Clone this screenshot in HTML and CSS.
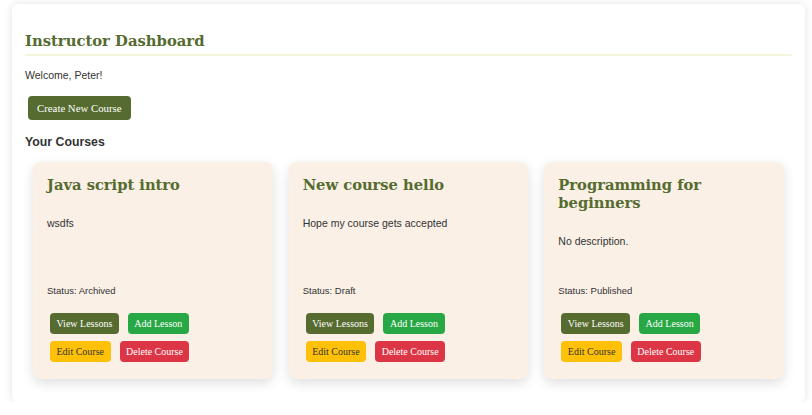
FILE: index.html
```html
<!DOCTYPE html>
<html lang="en">
<head>
<meta charset="utf-8">
<title>Instructor Dashboard</title>
<link rel="stylesheet" href="styles.css">
</head>
<body>
<div class="dashboard">
  <h2 class="page-title">Instructor Dashboard</h2>
  <p class="welcome">Welcome, Peter!</p>
  <button class="btn btn-olive btn-create">Create New Course</button>
  <h3 class="section-title">Your Courses</h3>
  <div class="course-grid">
    <div class="course-card">
      <h3 class="course-title">Java script intro</h3>
      <p class="course-desc">wsdfs</p>
      <p class="course-status">Status: Archived</p>
      <div class="course-actions">
        <div class="action-row">
          <button class="btn btn-olive">View Lessons</button>
          <button class="btn btn-green">Add Lesson</button>
        </div>
        <div class="action-row">
          <button class="btn btn-yellow">Edit Course</button>
          <button class="btn btn-red">Delete Course</button>
        </div>
      </div>
    </div>
    <div class="course-card">
      <h3 class="course-title">New course hello</h3>
      <p class="course-desc">Hope my course gets accepted</p>
      <p class="course-status">Status: Draft</p>
      <div class="course-actions">
        <div class="action-row">
          <button class="btn btn-olive">View Lessons</button>
          <button class="btn btn-green">Add Lesson</button>
        </div>
        <div class="action-row">
          <button class="btn btn-yellow">Edit Course</button>
          <button class="btn btn-red">Delete Course</button>
        </div>
      </div>
    </div>
    <div class="course-card">
      <h3 class="course-title">Programming for beginners</h3>
      <p class="course-desc">No description.</p>
      <p class="course-status">Status: Published</p>
      <div class="course-actions">
        <div class="action-row">
          <button class="btn btn-olive">View Lessons</button>
          <button class="btn btn-green">Add Lesson</button>
        </div>
        <div class="action-row">
          <button class="btn btn-yellow">Edit Course</button>
          <button class="btn btn-red">Delete Course</button>
        </div>
      </div>
    </div>
  </div>
</div>
</body>
</html>
```

FILE: styles.css
```css
* { box-sizing: border-box; }

html, body {
  margin: 0;
  background: #ffffff;
}

body {
  padding: 4px 7px 0 12px;
  font-family: "Liberation Sans", Arial, sans-serif;
  font-size: 10.5px;
  color: #333333;
}

.dashboard {
  background: #ffffff;
  border-radius: 6px;
  box-shadow: 0 0 8px rgba(0, 0, 0, 0.12);
  padding: 13px 13px 23px 13px;
  display: flex;
  flex-direction: column;
  align-items: flex-start;
}

.page-title {
  align-self: stretch;
  margin: 14px 0 0 0;
  padding-bottom: 3px;
  border-bottom: 2px solid #f5f5dc;
  font-family: "DejaVu Serif", Georgia, serif;
  font-weight: bold;
  font-size: 14.8px;
  line-height: 20px;
  color: #556b2f;
}

.welcome {
  margin: 12px 0 0 0;
  line-height: 14px;
}

.btn {
  font-family: "Liberation Serif", "Times New Roman", serif;
  border: none;
  border-radius: 4px;
  cursor: pointer;
  color: #ffffff;
  padding: 0 7px;
  margin: 3px;
}

.btn-create {
  margin: 14px 0 0 3px;
  height: 24px;
  font-size: 10.8px;
  padding: 0 9px;
}

.btn-olive { background: #556b2f; }
.btn-green { background: #28a745; }
.btn-yellow { background: #ffc107; color: #333333; }
.btn-red { background: #dc3545; }

.section-title {
  margin: 14px 0 0 0;
  font-size: 12.3px;
  line-height: 16px;
  font-weight: bold;
  color: #333333;
}

.course-grid {
  align-self: stretch;
  margin-top: 12px;
  padding: 0 8px;
  display: grid;
  grid-template-columns: repeat(3, 1fr);
  gap: 16px;
}

.course-card {
  background: #faf0e6;
  border-radius: 8px;
  box-shadow: 0 4px 12px rgba(0, 0, 0, 0.13);
  padding: 14px;
  display: flex;
  flex-direction: column;
}

.course-title {
  margin: 0;
  font-family: "DejaVu Serif", Georgia, serif;
  font-weight: bold;
  font-size: 14.7px;
  line-height: 18px;
  color: #556b2f;
}

.course-desc {
  margin: 22px 0 36px 0;
  line-height: 14px;
  flex: 1;
}

.course-status {
  margin: 0;
  font-size: 9.5px;
  line-height: 14px;
}

.course-actions {
  margin-top: 12px;
  display: flex;
  flex-direction: column;
  gap: 1px;
}

.action-row {
  display: flex;
  gap: 3px;
}

.action-row .btn {
  height: 21px;
  font-size: 10px;
  padding: 0 6.5px;
}
```
